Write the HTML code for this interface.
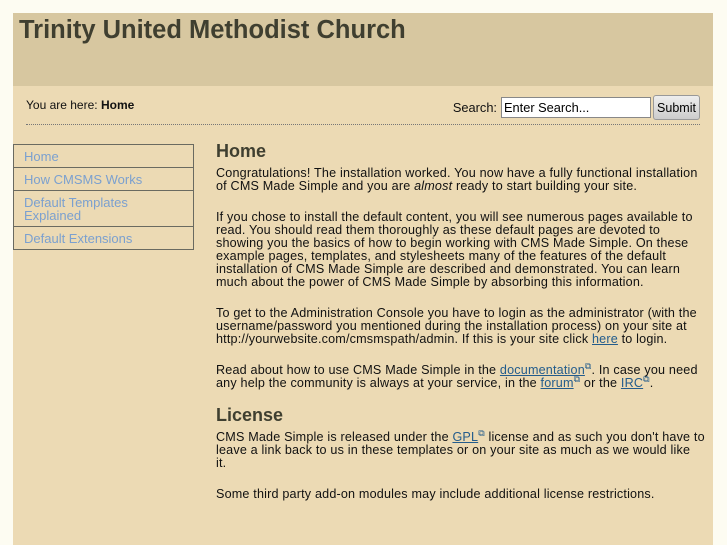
<!DOCTYPE html>
<html><head><meta charset="utf-8"><style>
*{margin:0;padding:0;box-sizing:border-box}
body{width:727px;height:545px;background:#fdfcf2;font-family:"Liberation Sans",sans-serif;font-size:12.5px;color:#111;overflow:hidden;position:relative}
#page{position:absolute;left:13px;top:13px;width:700px;height:532px;background:#ecdab4}
#hdr{height:73px;background:#d7c7a0}
#hdr h1{font-size:25.5px;color:#3f3f30;padding:2px 0 0 6px;font-weight:bold;line-height:30px}
.crumb{position:absolute;left:13px;top:85px;font-size:12px}
.search{position:absolute;right:13px;top:82px;display:flex;align-items:center;font-size:12.8px}
.search input{width:150px;height:21px;border:1px solid #888;background:#fff;font:12.8px "Liberation Sans",sans-serif;padding:1px 2px;margin:0 2px 0 4px}
.search button{height:25px;width:47px;border:1px solid #999;border-radius:3px;background:linear-gradient(#eee,#ccc);font:12.5px "Liberation Sans",sans-serif}
.dots{position:absolute;left:13px;right:13px;top:111px;border-top:1px dotted #777}
#nav{position:absolute;left:0;top:131px;width:181px;border:1px solid #6a6a60;border-bottom:none}
#nav div{border-bottom:1px solid #6a6a60;padding:5px 10px 4px 10px;color:#7ba0cf;font-size:13px;line-height:13px}
#main{position:absolute;left:203px;top:127px;width:491px;font-size:12.6px;letter-spacing:0.18px;line-height:13px}
h2{font-size:18px;color:#3f3f30;margin-bottom:5px;line-height:22px;letter-spacing:0}
h2.lic{margin-top:-4px;margin-bottom:5px}
p{margin-bottom:18px}
a{color:#235c8c;text-decoration:underline}
sup{font-size:9px;color:#235c8c;line-height:0}
</style></head><body>
<div id="page">
<div id="hdr"><h1>Trinity United Methodist Church</h1></div>
<div class="crumb">You are here: <b>Home</b></div>
<div class="search">Search: <input value="Enter Search..."><button>Submit</button></div>
<div class="dots"></div>
<div id="nav"><div>Home</div><div>How CMSMS Works</div><div>Default Templates Explained</div><div>Default Extensions</div></div>
<div id="main">
<h2>Home</h2>
<p>Congratulations! The installation worked. You now have a fully functional installation of CMS Made Simple and you are <i>almost</i> ready to start building your site.</p>
<p>If you chose to install the default content, you will see numerous pages available to read. You should read them thoroughly as these default pages are devoted to showing you the basics of how to begin working with CMS Made Simple. On these example pages, templates, and stylesheets many of the features of the default installation of CMS Made Simple are described and demonstrated. You can learn much about the power of CMS Made Simple by absorbing this information.</p>
<p>To get to the Administration Console you have to login as the administrator (with the username/password you mentioned during the installation process) on your site at http://yourwebsite.com/cmsmspath/admin. If this is your site click <a>here</a> to login.</p>
<p>Read about how to use CMS Made Simple in the <a>documentation</a><sup>⧉</sup>. In case you need any help the community is always at your service, in the <a>forum</a><sup>⧉</sup> or the <a>IRC</a><sup>⧉</sup>.</p>
<h2 class="lic">License</h2>
<p>CMS Made Simple is released under the <a>GPL</a><sup>⧉</sup> license and as such you don't have to leave a link back to us in these templates or on your site as much as we would like<br>it.</p>
<p>Some third party add-on modules may include additional license restrictions.</p>
</div>
</div>
</body></html>
